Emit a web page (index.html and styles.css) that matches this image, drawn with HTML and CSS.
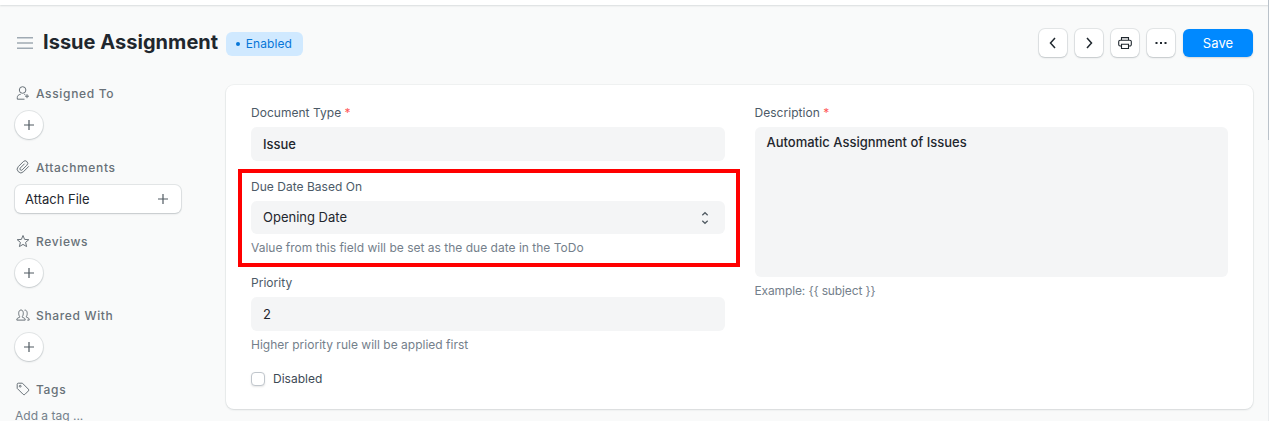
FILE: index.html
```html
<!DOCTYPE html>
<html lang="en">
<head>
<meta charset="utf-8">
<title>Issue Assignment</title>
<link rel="stylesheet" href="styles.css">
</head>
<body>
<div class="navbar"></div>
<header class="page-head">
  <svg class="menu" width="16" height="12" viewBox="0 0 16 12"><path d="M0 .7h16M0 6h16M0 11.3h16"/></svg>
  <h1 class="title">Issue Assignment</h1>
  <span class="pill"><i class="dot"></i><span>Enabled</span></span>
  <div class="actions">
    <button class="icon-btn"><svg width="16" height="16" viewBox="0 0 16 16"><path d="M10 3 5.500 8 10 13"/></svg></button>
    <button class="icon-btn"><svg width="16" height="16" viewBox="0 0 16 16"><path d="M6 3l4.500 5L6 13"/></svg></button>
    <button class="icon-btn"><svg class="thin" width="16" height="16" viewBox="0 0 16 16"><path d="M4.500 5.200V2.600h7v2.600M4.500 11H3.200a1.500 1.500 0 0 1-1.500-1.500V6.700a1.500 1.500 0 0 1 1.500-1.500h9.600a1.500 1.500 0 0 1 1.500 1.500v2.800a1.500 1.500 0 0 1-1.500 1.500h-1.300M4.500 9.200h7v4.300h-7z"/></svg></button>
    <button class="icon-btn"><svg class="dots" width="16" height="16" viewBox="0 0 16 16"><path d="M2.500 7h2v2h-2zM7 7h2v2H7zM11.500 7h2v2h-2z"/></svg></button>
    <button class="save">Save</button>
  </div>
</header>
<div class="layout">
  <aside class="sidebar">
    <section class="group">
      <h2 class="group-title"><svg width="16" height="16" viewBox="0 0 16 16"><circle cx="7.600" cy="5" r="3.300"/><path d="M5.700 9.300C3.400 9.600 2.300 10.800 2.300 12.500v1.700h7.200M9.300 9.400l1 .3M12 9.200v4M10 11.200h4"/></svg>Assigned To</h2>
      <button class="add"><svg width="12" height="12" viewBox="0 0 12 12"><path d="M6 1v10M1 6h10"/></svg></button>
    </section>
    <section class="group">
      <h2 class="group-title"><svg width="16" height="16" viewBox="0 0 16 16"><path d="M13.800 7.300 8.500 12.700a3.600 3.600 0 0 1-5.200 0 3.600 3.600 0 0 1 0-5.100l5-5a2.500 2.500 0 0 1 3.600 0 2.500 2.500 0 0 1 0 3.600l-4.700 4.700a1.350 1.350 0 0 1-1.900 0 1.350 1.350 0 0 1 0-1.900L9.600 4.700"/></svg>Attachments</h2>
      <button class="attach"><span>Attach File</span><svg width="12" height="12" viewBox="0 0 12 12"><path d="M6 1v10M1 6h10"/></svg></button>
    </section>
    <section class="group">
      <h2 class="group-title"><svg width="16" height="16" viewBox="0 0 16 16"><path d="m8 2.500 1.600 3.900 4.200.3-3.200 2.700 1 4.200L8 11.400l-3.600 2.200 1-4.200-3.200-2.700 4.200-.3z"/></svg>Reviews</h2>
      <button class="add"><svg width="12" height="12" viewBox="0 0 12 12"><path d="M6 1v10M1 6h10"/></svg></button>
    </section>
    <section class="group">
      <h2 class="group-title"><svg width="16" height="16" viewBox="0 0 16 16"><path d="M1.800 13.100c0-1.700.7-2.200 2.600-2.600.5-.1.500-.7.200-1.100C3.300 7.900 3.100 3 6 3s2.700 4.900 1.400 6.400c-.3.400-.3 1 .2 1.100 1.900.4 2.600.9 2.600 2.600zM9.500 3.200c3-.8 3.300 4.500 1.900 6.200-.3.400-.2.900.3 1 1.900.4 2.500 1 2.500 2.700h-1.900"/></svg>Shared With</h2>
      <button class="add"><svg width="12" height="12" viewBox="0 0 12 12"><path d="M6 1v10M1 6h10"/></svg></button>
    </section>
    <section class="group last">
      <h2 class="group-title"><svg width="16" height="16" viewBox="0 0 16 16"><path d="M2.200 3.300v4.100l6 6a1.200 1.200 0 0 0 1.700 0l3.500-3.500a1.200 1.200 0 0 0 0-1.700l-6-6H3.300a1.100 1.100 0 0 0-1.100 1.100z"/><circle cx="5.200" cy="5.200" r=".9"/></svg>Tags</h2>
      <div class="tag-hint">Add a tag ...</div>
    </section>
  </aside>
  <main class="card">
    <div class="column">
      <div class="field">
        <label class="label">Document Type <b class="req">*</b></label>
        <div class="control medium">Issue</div>
      </div>
      <div class="field highlighted">
        <label class="label">Due Date Based On</label>
        <div class="control select"><span>Opening Date</span><svg width="8" height="14" viewBox="0 0 8 14"><path d="M1.300 4.300 4 1.700l2.700 2.600M1.300 9.700 4 12.300l2.700-2.600"/></svg></div>
        <p class="help">Value from this field will be set as the due date in the ToDo</p>
      </div>
      <div class="field">
        <label class="label">Priority</label>
        <div class="control">2</div>
        <p class="help">Higher priority rule will be applied first</p>
      </div>
      <label class="check"><i class="box"></i>Disabled</label>
    </div>
    <div class="column">
      <div class="field">
        <label class="label">Description <b class="req">*</b></label>
        <div class="control area medium">Automatic Assignment of Issues</div>
        <p class="help example">Example: {{ subject }}</p>
      </div>
    </div>
  </main>
</div>
<div class="scroll-track"><div class="scroll-thumb"></div></div>
</body>
</html>
```
FILE: styles.css
```css
* { box-sizing: border-box; }
body {
  margin: 0;
  height: 421px;
  overflow: hidden;
  background: #f9fafa;
  color: #1f272e;
  font-family: Inter, sans-serif;
  font-size: 13px;
}
h1, h2, p { margin: 0; }
button { border: 0; padding: 0; font: inherit; color: inherit; background: #fff; }
svg { display: block; flex: none; fill: none; stroke: currentColor; }

.navbar { height: 5px; background: #fff; box-shadow: 0 1px 2px rgba(25, 39, 52, .14); }

.page-head { display: flex; align-items: center; height: 76px; padding: 0 16px 0 17px; }
.menu { color: #a0aab3; stroke-width: 1.5; }
.title { margin: -3px 0 0 10px; font-size: 20px; font-weight: 700; line-height: 30px; letter-spacing: .03px; white-space: nowrap; }
.pill {
  display: flex; align-items: center; gap: 6px;
  width: 77px; height: 24px; margin: 1px 0 0 7.500px; padding-left: 10px;
  border-radius: 6px; background: #d0e9ff; color: #0676d8; font-size: 12px; letter-spacing: .1px;
}
.dot { width: 4px; height: 4px; border-radius: 50%; background: #0676d8; }
.actions { display: flex; align-items: center; gap: 8px; margin-left: auto; }
.icon-btn, .add, .attach { box-shadow: 0 0 0 1px rgba(25, 39, 52, .09), 0 1px 2px rgba(25, 39, 52, .16); }
.icon-btn { display: grid; place-items: center; width: 28px; height: 28px; border-radius: 6px; stroke-width: 1.5; }
.thin { stroke-width: 1.1; }
.dots { fill: #1f272e; stroke: none; }
.save { width: 70px; height: 28px; border-radius: 6px; background: #0089ff; color: #fff; letter-spacing: .1px; box-shadow: 0 1px 2px rgba(25, 39, 52, .16); }

.layout { display: flex; align-items: flex-start; height: 340px; overflow: hidden; padding: 3px 16px 0 14px; }
.sidebar { width: 212px; padding-left: 1px; }
.group { height: 74px; }
.group.last { height: 44px; }
.group-title {
  display: flex; align-items: center; gap: 5px;
  height: 18px; margin-bottom: 9px;
  color: #687178; font-size: 12px; font-weight: 500; letter-spacing: .66px;
}
.group-title svg { stroke-width: 1; }
.add { display: grid; place-items: center; width: 28px; height: 28px; border-radius: 50%; color: #505a62; }
.add svg, .attach svg { stroke-width: 1.2; }
.attach {
  display: flex; align-items: center; justify-content: space-between;
  width: 166px; height: 28px; padding: 0 12px 0 10px; border-radius: 6px;
}
.attach svg { color: #505a62; }
.tag-hint { color: #74808b; font-size: 12px; line-height: 18px; }

.card {
  display: flex; gap: 30px; flex: 1; height: 324px; margin-top: 1px; padding: 19px 25px 0;
  border-radius: 8px; background: #fff;
  box-shadow: 0 0 0 1px rgba(25, 39, 52, .04), 0 1px 2px rgba(25, 39, 52, .12);
}
.column { flex: 1; }
.field { position: relative; margin-bottom: 17px; }
.label { display: block; height: 18px; margin-bottom: 5px; color: #4c5a67; font-size: 12px; line-height: 18px; letter-spacing: .03px; }
.req { color: #ff5858; font-weight: 400; }
.control { height: 34px; padding: 0 12px; border-radius: 6px; background: #f4f5f6; line-height: 35px; }
.medium { font-weight: 500; }
.select { display: flex; align-items: center; justify-content: space-between; height: 33px; padding-right: 16px; line-height: 33px; }
.select svg { color: #505a62; stroke-width: 1.2; }
.help { margin-top: 5px; color: #74808b; font-size: 12px; line-height: 18px; letter-spacing: .01px; }
.example { letter-spacing: -.13px; }
.area { height: 150px; padding-top: 5px; line-height: 20px; }
.highlighted::after { content: ""; position: absolute; inset: -9px -15px -10px -13px; border: 4px solid #f00; }
.check { display: flex; align-items: center; gap: 8px; height: 18px; margin-top: -1px; color: #3d4a55; font-size: 12px; line-height: 14px; }
.field + .check { margin-top: -1px; }
.box { width: 14px; height: 14px; border: 1px solid #c0c6cc; border-radius: 4px; background: #fff; box-shadow: 0 1px 2px rgba(0, 0, 0, .1); }

.scroll-track { position: absolute; top: 0; right: 0; width: 1px; height: 421px; background: #e9ecee; }
.scroll-thumb { height: 140px; background: #bac2ca; }
```
